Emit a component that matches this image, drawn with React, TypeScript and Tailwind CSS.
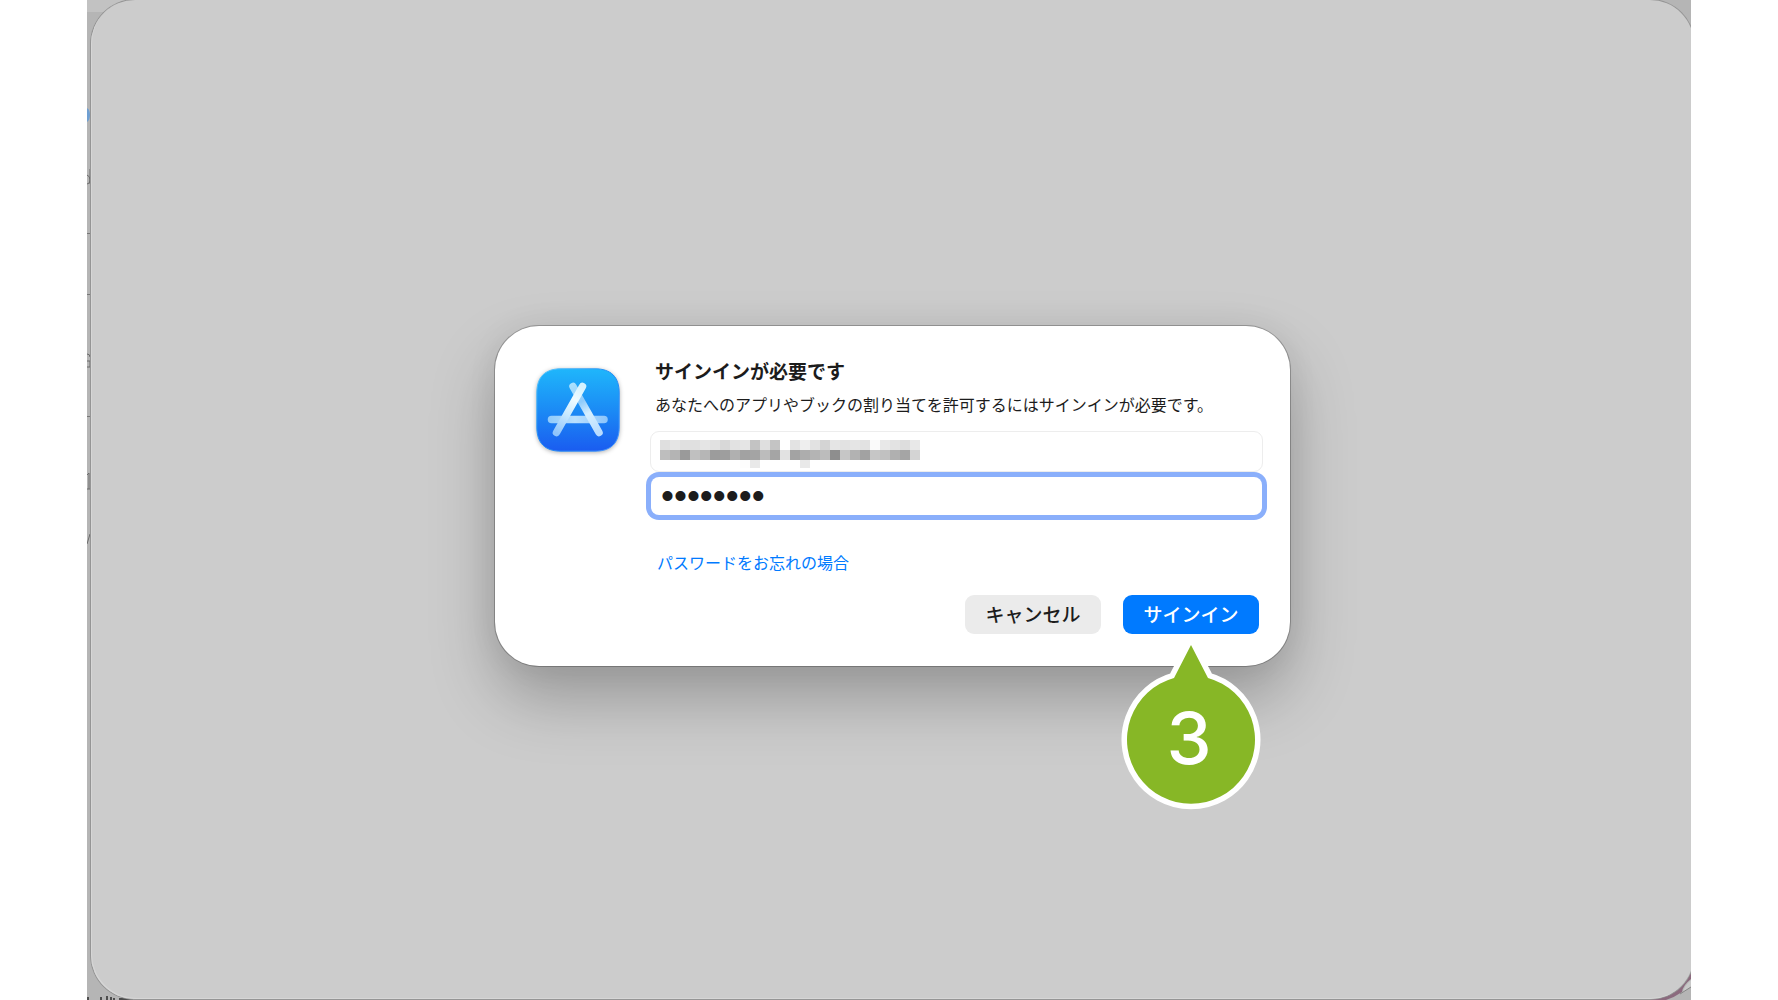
import { useState } from "react";

const MASK_ROWS = [
  ["df", "e5", "e0", "e0", "e5", "e1", "d8", "e2", "e5", "c3", "df", "c4", "ff", "e3", "ee", "e2", "d4", "e5", "e2", "e5", "e2", "fa", "e8", "e3", "dd", "e8"],
  ["be", "b4", "9a", "c0", "b6", "9c", "9e", "b0", "a2", "a4", "bc", "a5", "e2", "a3", "ad", "b4", "bc", "8e", "c6", "b2", "a2", "c6", "c1", "b0", "a5", "d4"],
  ["ff", "ff", "ff", "ff", "ff", "ff", "ff", "ff", "fd", "e9", "ff", "ff", "ff", "ff", "e9"],
];

function AppStoreIcon() {
  return (
    <svg className="w-[84px] h-[84px] mt-[11px] shrink-0 overflow-visible drop-shadow-[0_1px_2px_rgba(0,0,0,0.3)]" viewBox="0 0 84 84" fill="none" aria-hidden="true">
      <defs>
        <linearGradient id="tile" x1="0" y1="0" x2="0" y2="1">
          <stop offset="0" stopColor="#1fb6fb" />
          <stop offset="0.5" stopColor="#1b8bf5" />
          <stop offset="1" stopColor="#1a5cf0" />
        </linearGradient>
        <linearGradient id="rim" x1="0" y1="0" x2="1" y2="1">
          <stop offset="0" stopColor="#5ccdff" />
          <stop offset="0.5" stopColor="#1b86f5" />
          <stop offset="1" stopColor="#4f9bff" />
        </linearGradient>
        <linearGradient id="bar" gradientUnits="userSpaceOnUse" x1="12" y1="0" x2="72" y2="0">
          <stop offset="0" stopColor="#8fcafb" />
          <stop offset="0.45" stopColor="#b9e0fe" />
          <stop offset="1" stopColor="#8cc4fb" />
        </linearGradient>
        <linearGradient id="front" gradientUnits="userSpaceOnUse" x1="46" y1="17" x2="20" y2="65">
          <stop offset="0" stopColor="#d3f2ff" />
          <stop offset="0.3" stopColor="#effbff" />
          <stop offset="0.6" stopColor="#c9eaff" />
          <stop offset="1" stopColor="#8fc4fb" />
        </linearGradient>
        <linearGradient id="back" gradientUnits="userSpaceOnUse" x1="36" y1="17" x2="62" y2="65">
          <stop offset="0" stopColor="#a9e0fd" />
          <stop offset="0.35" stopColor="#8fcbfb" />
          <stop offset="0.6" stopColor="#d6efff" />
          <stop offset="1" stopColor="#b8dcff" />
        </linearGradient>
      </defs>
      <path
        d="M25 .8H59C75 .8 83.200 9 83.200 25V59C83.200 75 75 83.200 59 83.200H25C9 83.200 .8 75 .8 59V25C.8 9 9 .8 25 .8Z"
        fill="url(#tile)"
        stroke="url(#rim)"
      />
      <g strokeLinecap="round" strokeWidth="7.500">
        <path d="M15.500 51.500H68" stroke="url(#bar)" />
        <path d="M37 18.500 63 64.500" stroke="url(#back)" />
        <path d="M46.500 18.500 20.500 64.500" stroke="url(#front)" />
      </g>
    </svg>
  );
}

function MaskedAccount() {
  return (
    <svg className="absolute left-[10px] top-[9px] w-[260px] h-7 pointer-events-none" viewBox="0 0 260 28" shapeRendering="crispEdges" aria-hidden="true">
      {MASK_ROWS.map((row, y) =>
        row.map((c, x) => <rect key={`${x}-${y}`} x={x * 10} y={y * 10} width="10" height={y === 2 ? 8 : 10} fill={`#${c}${c}${c}`} />)
      )}
    </svg>
  );
}

function StepPin() {
  return (
    <svg className="absolute top-full left-1/2 -translate-x-1/2 w-[140px] h-[180px] pointer-events-none" viewBox="0 0 140 180">
      <path
        d="M70 11 87 44A64 64 0 1 1 53 44Z"
        fill="#fff"
        stroke="#fff"
        strokeWidth="11"
        strokeLinejoin="round"
      />
      <path d="M70 11 87 44A64 64 0 1 1 53 44Z" fill="#87b726" />
      <text x="68" y="130" textAnchor="middle" fill="#fff" className="font-['Inter',sans-serif] text-[72px] font-medium">3</text>
    </svg>
  );
}

// slivers of the page behind that show at the window's edges
function BackdropLeft() {
  return (
    <svg className="absolute left-0 top-0 w-12 h-[560px]" viewBox="0 0 48 560" fill="none" aria-hidden="true">
      <path d="M0 0H48V12H0Z" fill="#c2c2c2" />
      <path d="M0 108Q3 110 3 115T0 122Z" fill="#6f9fd2" />
      <path d="M0 175Q3 176 3 180T0 184M3 169V184M0 354Q3 354 3 357M0 361H3V367H0M0 475 2 473V489M0 489H3M3 534 0 544" stroke="#6b6b6b" />
      <path d="M0 233.500H4M0 294.500H4M0 416.500H4" stroke="#777" />
    </svg>
  );
}

function BackdropBottom() {
  return (
    <>
      <svg className="absolute left-0 bottom-0 w-12 h-4" viewBox="0 0 48 16" fill="none" aria-hidden="true">
        <path d="M1 13V16M14 13V16M20 12V16M24 13V16M27 14V16M32 15H46" stroke="#4d4d4d" strokeWidth="2" />
      </svg>
      <svg className="absolute right-0 bottom-0 w-[740px] h-9" viewBox="0 0 740 36" fill="none" aria-hidden="true">
        <path d="M0 35.500H640" stroke="#8c8489" />
        <path d="M620 34H680L740 0V15Q732 21 731 28 724 33 715 36H620Z" fill="#8b6a7e" />
        <path d="M732 28Q733 22 740 16V23Z" fill="#c9c9c9" />
        <path d="M729 30 740 23" stroke="#858585" />
      </svg>
    </>
  );
}

export default function App() {
  const [account, setAccount] = useState("");
  const [password, setPassword] = useState("password");

  return (
    <div className="min-h-screen bg-white px-[87px] flex font-['Noto_Sans_CJK_JP',sans-serif] text-[#1c1c1c]">
      <main className="relative flex-1 flex overflow-hidden bg-[#b5b5b5]">
        <BackdropLeft />
        <BackdropBottom />
        <div className="relative flex-1 flex items-center justify-center ml-1 -mr-[3px] mb-px pb-[7px] rounded-[44px] bg-[#ccc] shadow-[0_0_0_1px_#959595,inset_1px_-1px_0_#d6d6d6]">
          <form
            role="dialog"
            aria-labelledby="title"
            onSubmit={(e) => e.preventDefault()}
            className="w-full max-w-[795px] flex items-start gap-[30px] pl-[41px] pr-[27px] pt-[31px] pb-8 bg-white rounded-[44px] shadow-[0_0_0_1px_rgba(0,0,0,0.24),0_32px_64px_rgba(0,0,0,0.26),0_0_32px_rgba(0,0,0,0.06)]"
          >
            <AppStoreIcon />
            <div className="flex-1 flex flex-col">
              <h1 id="title" className="pl-[5px] text-[19px] leading-7 font-bold">サインインが必要です</h1>
              <p className="pl-[5px] mt-[7px] text-[16px] leading-6">あなたへのアプリやブックの割り当てを許可するにはサインインが必要です。</p>
              <div className="relative mt-[15px]">
                <input
                  type="text"
                  aria-label="アカウント"
                  value={account}
                  onChange={(e) => setAccount(e.target.value)}
                  className="block w-full h-[41px] px-2 rounded-[9px] border border-[#ededed] outline-none text-[16px]"
                />
                <MaskedAccount />
              </div>
              <input
                type="password"
                aria-label="パスワード"
                value={password}
                onChange={(e) => setPassword(e.target.value)}
                className="block mt-[5px] h-[38px] mx-px px-[10px] rounded-lg bg-white outline-none shadow-[0_0_0_5px_#8aaffb] font-['Liberation_Sans',sans-serif] text-[37px] leading-[38px]"
              />
              <a href="#forgot" className="self-start pl-[7px] mt-[35px] text-[16px] leading-6 text-[#007aff]">パスワードをお忘れの場合</a>
              <div className="flex justify-end gap-[22px] mt-[21px] pr-1">
                <button type="button" className="w-[136px] h-[39px] rounded-[9px] bg-[#ebebeb] text-[19px] font-medium">キャンセル</button>
                <div className="relative">
                  <button type="submit" className="w-[136px] h-[39px] rounded-[9px] bg-[#007aff] text-white text-[19px] font-medium">サインイン</button>
                  <StepPin />
                </div>
              </div>
            </div>
          </form>
        </div>
      </main>
    </div>
  );
}
